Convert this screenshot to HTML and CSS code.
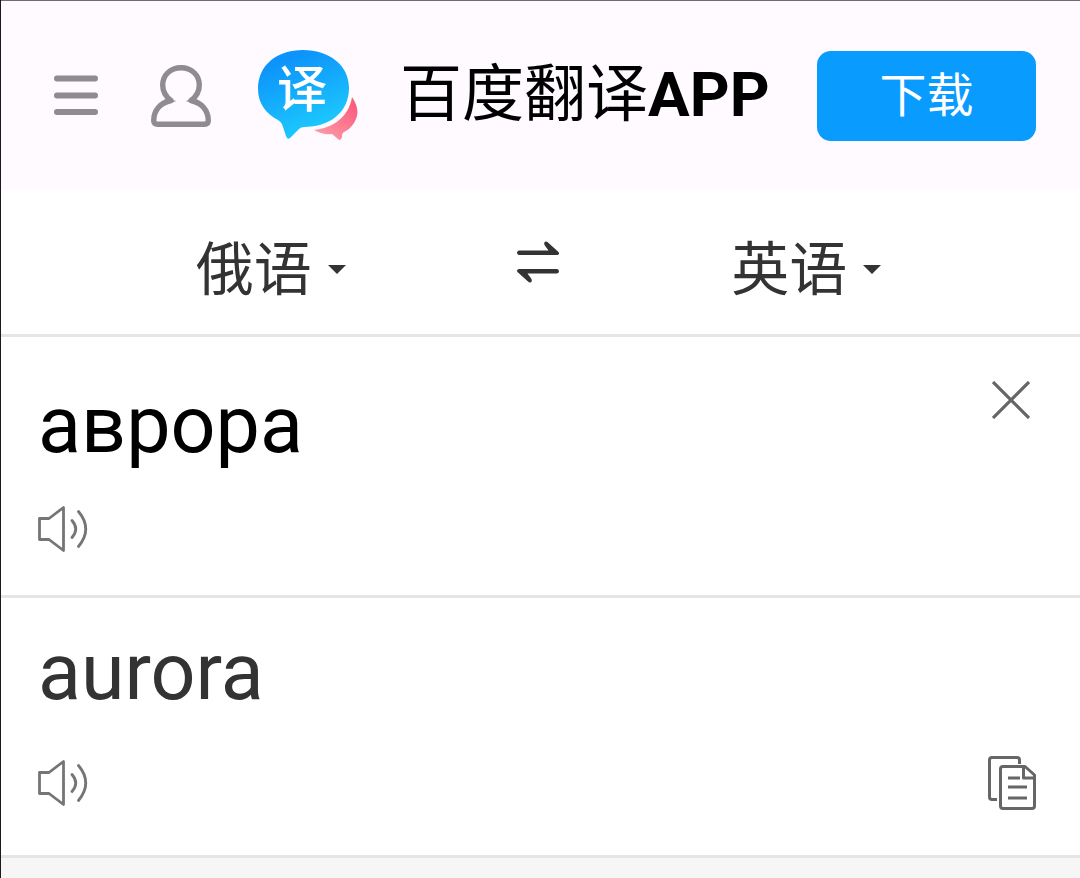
FILE: index.html
```html
<!DOCTYPE html>
<html lang="zh-CN">
<head>
  <meta charset="UTF-8">
  <meta name="viewport" content="width=device-width, initial-scale=1.0">
  <title>百度翻译</title>
  <link rel="stylesheet" href="styles.css">
</head>
<body>
  <!-- Top bar with menu, account, brand and download button -->
  <header class="header">
    <button class="icon-btn menu-btn" type="button" aria-label="菜单">
      <svg width="46" height="42" viewBox="0 0 46 42" fill="none" stroke="#8e8c8f" stroke-width="6" stroke-linecap="round">
        <path d="M4 3.500H42M4 20.500H42M4 37H42"/>
      </svg>
    </button>
    <button class="icon-btn user-btn" type="button" aria-label="用户">
      <svg width="60" height="62" viewBox="0 0 60 62" fill="none" stroke="#8e8c8f" stroke-width="5.4" stroke-linejoin="round">
        <path d="M20 35.5C14.500 31.500 11.700 26 11.700 20C11.700 10 19.500 2.700 30 2.700S48.300 10 48.300 20C48.300 26 45.500 31.500 40 35.500C50 37.500 57.300 45 57.300 55.500Q57.300 59.300 53.500 59.300H6.500Q2.700 59.300 2.700 55.500C2.700 45 10 37.500 20 35.500Z"/>
        <path fill="#8e8c8f" stroke="none" d="M16 34L25.500 36L16 39ZM44 34L34.500 36L44 39Z"/>
      </svg>
    </button>
    <a class="brand" href="#">
      <svg class="logo" width="100" height="91" viewBox="0 0 100 91" aria-hidden="true">
        <defs>
          <linearGradient id="blue" x1="0.3" y1="0" x2="0.7" y2="1">
            <stop offset="0.1" stop-color="#0d94fb"/>
            <stop offset="1" stop-color="#1fd0fd"/>
          </linearGradient>
          <linearGradient id="pink" x1="1" y1="0" x2="0.3" y2="1">
            <stop offset="0.2" stop-color="#fb5f80"/>
            <stop offset="1" stop-color="#fd9aa5"/>
          </linearGradient>
        </defs>
        <path fill="url(#pink)" d="M94 47C99 54 101 62 98 69C96 74 92 79 86 82C84 83 84 85 84 87L83 89Q82 91 80 89L74 84C68 85 61 83 56 80C75 78 91 67 94 47Z"/>
        <path fill="url(#blue)" d="M45 0C71 0 91 15 91 38C91 62 72 77 46 77Q43 77 41 79L32 88Q29 90 28 86L24 74Q23 72 20 70C8 64 0 53 0 39C0 15 19 0 45 0Z"/>
        <text class="logo-text" x="19" y="57">译</text>
      </svg>
      <span class="brand-name">百度翻译<b>APP</b></span>
    </a>
    <button class="download-btn" type="button">下载</button>
  </header>

  <!-- Source and target language -->
  <nav class="languages">
    <label class="lang">
      <select class="lang-select" aria-label="源语言">
        <option>俄语</option>
        <option>英语</option>
      </select>
      <span class="caret"></span>
    </label>
    <button class="icon-btn swap-btn" type="button" aria-label="交换语言">
      <svg width="44" height="42" viewBox="0 0 44 42" fill="#333">
        <path d="M3 9.500H32.500L28.500 4Q27.500 1.500 29 0.800Q30.500 0 32 1.500L42.500 11Q44 13 41.500 14H3Q1 13.500 1 11.800T3 9.500Z"/>
        <path d="M41 28H3Q0 29 1.500 31L12 40.500Q13.500 42 15 41.200Q16.500 40.500 15.500 38L11.500 32.500H41Q43 32 43 30.200T41 28Z"/>
      </svg>
    </button>
    <label class="lang">
      <select class="lang-select" aria-label="目标语言">
        <option>英语</option>
        <option>俄语</option>
      </select>
      <span class="caret"></span>
    </label>
  </nav>

  <main>
    <!-- Text to translate -->
    <section class="panel source">
      <div class="panel-row">
        <input class="word" type="text" value="аврора" aria-label="原文" spellcheck="false">
        <button class="icon-btn clear-btn" type="button" aria-label="清空">
          <svg width="38" height="38" viewBox="0 0 38 38" fill="none" stroke="#666" stroke-width="3.200">
            <path d="M1 1L37 37M37 1L1 37"/>
          </svg>
        </button>
      </div>
      <div class="panel-row tools">
        <button class="icon-btn" type="button" aria-label="朗读原文">
          <svg width="50" height="46" viewBox="0 0 50 46" fill="none" stroke="#757575" stroke-width="2.800" stroke-linecap="round" stroke-linejoin="round">
            <path d="M1.500 12.500H11L25.500 1.500V44.500L11 33.500H1.500ZM34 14.500Q41.500 23 34 31.500M40.500 5.500Q55 23 40.500 40.500"/>
          </svg>
        </button>
      </div>
    </section>

    <!-- Translation result -->
    <section class="panel result">
      <p class="word">aurora</p>
      <div class="panel-row tools">
        <button class="icon-btn" type="button" aria-label="朗读译文">
          <svg width="50" height="46" viewBox="0 0 50 46" fill="none" stroke="#757575" stroke-width="2.800" stroke-linecap="round" stroke-linejoin="round">
            <path d="M1.500 12.500H11L25.500 1.500V44.500L11 33.500H1.500ZM34 14.500Q41.500 23 34 31.500M40.500 5.500Q55 23 40.500 40.500"/>
          </svg>
        </button>
        <button class="icon-btn" type="button" aria-label="复制">
          <svg width="48" height="54" viewBox="0 0 48 54" fill="none" stroke="#666" stroke-width="3" stroke-linejoin="round">
            <path d="M31.500 8V4Q31.500 1.500 29 1.500H4Q1.500 1.500 1.500 4V41Q1.500 43.500 4 43.500H9"/>
            <path d="M15 10.500H37L46.500 19V50Q46.500 52.500 44 52.500H15Q12.500 52.500 12.500 50V13Q12.500 10.500 15 10.500ZM35.500 11V22H46M20 22H32M20 31H39M20 42H39"/>
          </svg>
        </button>
      </div>
    </section>
  </main>
</body>
</html>
```
FILE: styles.css
```css
* {
    box-sizing: border-box;
}

body {
    margin: 0;
    min-height: 100vh;
    border-left: 1px solid #1c181d;
    background-color: #f6f6f6;
    color: #333;
    font-family: Roboto, "Noto Sans CJK SC", sans-serif;
}

/* Shared reset for buttons that only hold an icon */
.icon-btn {
    display: flex;
    padding: 0;
    border: none;
    background: none;
    cursor: pointer;
}

/* Top bar */
.header {
    display: flex;
    align-items: center;
    padding: 49px 44px 49px 52px;
    border-top: 1px solid #6f6c70;
    background-color: #fefaff;
}

.user-btn {
    margin-left: 52px;
}

.brand {
    display: flex;
    align-items: center;
    gap: 42px;
    margin-left: 47px;
    color: #000;
    text-decoration: none;
}

.logo-text {
    fill: #fff;
    font-family: "Noto Sans CJK SC", sans-serif;
    font-size: 50px;
    font-weight: 500;
}

.brand-name {
    padding-bottom: 2px;
    font-size: 62px;
    line-height: 88px;
    white-space: nowrap;
}

.download-btn {
    width: 219px;
    height: 90px;
    margin-left: auto;
    padding: 0 0 8px;
    border: none;
    border-radius: 14px;
    background-color: #0a9bff;
    color: #fff;
    font-family: inherit;
    font-size: 47px;
    cursor: pointer;
}

/* Language bar */
.languages {
    display: grid;
    grid-template-columns: repeat(3, 1fr);
    align-items: center;
    justify-items: center;
    height: 147px;
    padding: 0 140px 0 136px;
    border-bottom: 3px solid #e5e5e5;
    background-color: #fff;
}

.lang {
    display: flex;
    align-items: center;
    gap: 15px;
    padding-top: 15px;
}

.lang-select {
    appearance: none;
    padding: 0;
    border: none;
    background: none;
    color: #333;
    font-family: inherit;
    font-size: 58px;
    line-height: 80px;
}

.caret {
    border: 9px solid transparent;
    border-top-color: #333;
    border-bottom: none;
}

/* Source and result panels */
.panel {
    display: flex;
    flex-direction: column;
    justify-content: space-between;
    padding: 44px 44px 43px 37px;
    border-bottom: 3px solid #e5e5e5;
    background-color: #fff;
}

.panel-row {
    display: flex;
    align-items: flex-start;
    justify-content: space-between;
}

.word {
    flex: 1;
    min-width: 0;
    margin: 0;
    padding: 0;
    border: none;
    background: none;
    font-family: Roboto, sans-serif;
    font-size: 79px;
    line-height: 88px;
}

.source {
    min-height: 261px;
}

.source .word {
    color: #000;
}

.clear-btn {
    margin-right: 6px;
}

.result {
    min-height: 260px;
    padding-top: 30px;
    padding-bottom: 45px;
}

.result .word {
    flex: none;
}

.tools {
    align-items: center;
}
```
